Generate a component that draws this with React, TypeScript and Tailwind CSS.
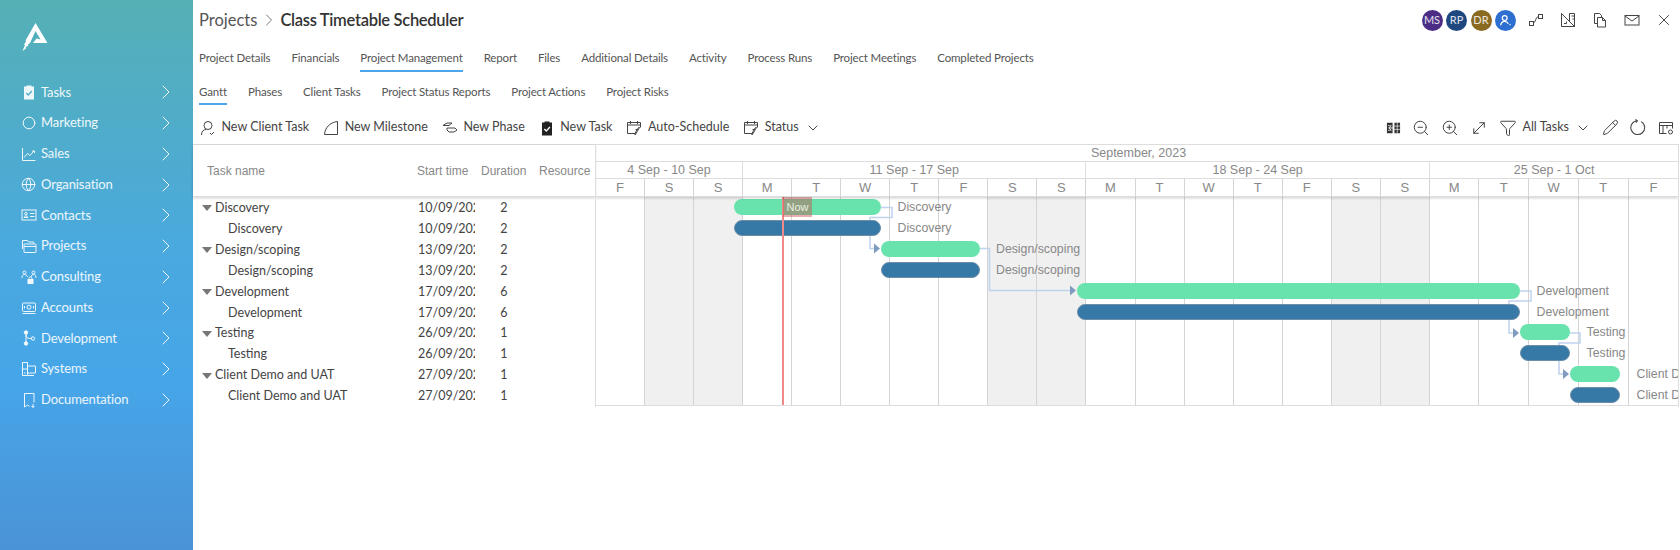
import {
  ChevronDown,
  ChevronRight,
  Circle,
  Funnel,
  Globe,
  MoveDiagonal,
  Pencil,
  X,
  ZoomIn,
  ZoomOut,
} from "lucide-react";
import type { ReactNode } from "react";

const DAY = 49.05;
const LAST_DAY = 49.7;
const ROW = 20.9;

function Ico({ size = 16, children, className = "" }: { size?: number; children: ReactNode; className?: string }) {
  return (
    <svg width={size} height={size} viewBox="0 0 16 16" fill="none" stroke="currentColor" strokeWidth="1" className={`shrink-0 ${className}`}>
      {children}
    </svg>
  );
}

function ClipboardFilled({ size = 16 }: { size?: number }) {
  return (
    <svg width={size} height={size} viewBox="0 0 16 16" className="shrink-0" fill="currentColor">
      <path d="M3 2.500h2.500V1.500h5v1H13v13H3z" />
      <path d="M5.300 9l2 2 3.600-4" fill="none" stroke="var(--tick)" strokeWidth="1.300" />
    </svg>
  );
}

function CalendarPen() {
  return (
    <Ico size={16}>
      <path d="M9 13.500H1.500v-11h13v5M1.500 5h13M4.500 1v3M11.500 1v3" />
      <path d="M13.500 7.500l-3.500 6-1 1.500.2-2 3.300-5.500zM9.500 9.500h2" />
    </Ico>
  );
}

const navIcons: Record<string, ReactNode> = {
  Tasks: <span className="[--tick:#55aecb]"><ClipboardFilled /></span>,
  Marketing: <Circle size={14} strokeWidth={1} absoluteStrokeWidth className="mx-px" />,
  Sales: (
    <Ico>
      <path d="M1.500 2v12.500h13M3 11.500l3.500-4 2.500 2 4-4.500M11 5h2.500v2" />
    </Ico>
  ),
  Organisation: <Globe size={15} strokeWidth={1} absoluteStrokeWidth />,
  Contacts: (
    <Ico>
      <rect x="1" y="3" width="14" height="10" />
      <circle cx="5" cy="6.700" r="1.300" />
      <path d="M3 10.500c.4-2 3.600-2 4 0zM9 6.500h4.500M9 9.500h4.500" />
    </Ico>
  ),
  Projects: (
    <Ico>
      <path d="M1.500 11V2.500h5l1 1.500h5v1.500" />
      <rect x="3" y="6" width="12" height="8.500" rx=".5" />
      <path d="M3 8.500h12" />
    </Ico>
  ),
  Consulting: (
    <Ico>
      <circle cx="3.500" cy="3.500" r="1.500" />
      <circle cx="12.500" cy="3.500" r="1.500" />
      <path d="M1 9c0-2.500 1-3.500 2.500-3.500S6 6.500 6.500 8M10 8c.5-1.500 1-2.500 2.500-2.500S15 6.500 15 9" />
      <rect x="7" y="10.500" width="5" height="4" fill="currentColor" />
      <path d="M8 10.500V9.500a1.500 1.500 0 0 1 3 0v1" />
    </Ico>
  ),
  Accounts: (
    <Ico>
      <rect x="1.500" y="3" width="13" height="8.500" rx="1" />
      <circle cx="8" cy="7.200" r="2" />
      <path d="M1.500 13.500h13M3.500 6v2.500M12.500 6v2.500" />
    </Ico>
  ),
  Development: (
    <Ico>
      <circle cx="5" cy="2.500" r="1.700" fill="currentColor" />
      <circle cx="5" cy="13.500" r="1.700" fill="currentColor" />
      <circle cx="12" cy="8.500" r="1.700" />
      <path d="M5 3v10M5 5c0 3 2 3.500 5.500 3.500" />
    </Ico>
  ),
  Systems: (
    <Ico>
      <path d="M6.500 14.500h-5V1.500h5z" />
      <path d="M6.500 5h8v7h-8M3 12h1.500M7 14.500h6M1.500 8h5" />
    </Ico>
  ),
  Documentation: (
    <Ico>
      <path d="M3.500 15V1.500h9.500v9M3.500 15l3-2 2 1.500M12 12v3.500M10.500 14l1.500 1.500 1.500-1.500" />
    </Ico>
  ),
};

const navItems = ["Tasks", "Marketing", "Sales", "Organisation", "Contacts", "Projects", "Consulting", "Accounts", "Development", "Systems", "Documentation"];
const mainTabs = ["Project Details", "Financials", "Project Management", "Report", "Files", "Additional Details", "Activity", "Process Runs", "Project Meetings", "Completed Projects"];
const subTabs = ["Gantt", "Phases", "Client Tasks", "Project Status Reports", "Project Actions", "Project Risks"];

const days = "FSSMTWTFSSMTWTFSSMTWTF".split("");
const weekends = [1, 2, 8, 9, 15, 16];
const dayWidth = (i: number) => (i >= 17 ? LAST_DAY : DAY);
const weeks = [
  { label: "4 Sep - 10 Sep", w: 3 * DAY },
  { label: "11 Sep - 17 Sep", w: 7 * DAY },
  { label: "18 Sep - 24 Sep", w: 7 * DAY },
  { label: "25 Sep - 1 Oct", w: 5 * LAST_DAY },
];

const tasks = [
  { name: "Discovery", start: "10/09/2023", dur: 2, from: 138, to: 285 },
  { name: "Design/scoping", start: "13/09/2023", dur: 2, from: 285, to: 383.5 },
  { name: "Development", start: "17/09/2023", dur: 6, from: 481, to: 924 },
  { name: "Testing", start: "26/09/2023", dur: 1, from: 924, to: 974 },
  { name: "Client Demo and UAT", start: "27/09/2023", dur: 1, from: 974, to: 1024 },
];

// dependency lines, in chart coordinates
const links = [
  "M285 10.500H296V20.500H274V51.500H279",
  "M383.500 51.500H393.500V93.500H475",
  "M924 94H935V104H913V136H918",
  "M974 136H984V146H963V177H968",
];
const arrows = [[285, 51.5], [481, 93.5], [924, 136], [974, 177]];

function TableRow({ name, start, dur, parent }: { name: string; start: string; dur: number; parent: boolean }) {
  return (
    <div className="flex h-[20.900px] items-center text-[12.500px] text-[#444]">
      <div className="flex w-[225px] items-center pl-[9px]">
        {parent ? (
          <>
            <span className="mr-[3px] h-0 w-0 border-x-[5px] border-t-[6px] border-x-transparent border-t-[#777]" />
            <span>{name}</span>
          </>
        ) : (
          <span className="pl-[26px]">{name}</span>
        )}
      </div>
      <div className="w-[56.500px] overflow-hidden whitespace-nowrap">{start}</div>
      <div className="w-[58.500px] text-center">{dur}</div>
    </div>
  );
}

function Gantt() {
  return (
    <div className="mr-px flex border-t border-[#ddd] font-['Liberation_Sans',sans-serif]">
      {/* Left: task table */}
      <div className="w-[402px] shrink-0">
        <div className="flex h-[52px] items-center border-b border-[#ddd] text-[12px] text-[#888] shadow-[0_1px_3px_rgba(0,0,0,0.2)]">
          <div className="w-[224px] pl-[14px]">Task name</div>
          <div className="w-[64px]">Start time</div>
          <div className="w-[58px]">Duration</div>
          <div>Resource</div>
        </div>
        <div className="pt-px font-['Lato',sans-serif]">
          {tasks.map((t) => (
            <div key={t.name}>
              <TableRow name={t.name} start={t.start} dur={t.dur} parent />
              <TableRow name={t.name} start={t.start} dur={t.dur} parent={false} />
            </div>
          ))}
        </div>
      </div>

      {/* Right: chart */}
      <div className="min-w-0 flex-1 overflow-hidden border-x border-[#ddd]">
        <div className="relative z-10 text-[12.500px] text-[#888] shadow-[0_1px_3px_rgba(0,0,0,0.2)]">
          <div className="flex h-[17px] items-center justify-center border-b border-[#ddd] pl-[3px]">September, 2023</div>
          <div className="flex h-[17px] border-b border-[#ddd]">
            {weeks.map((w) => (
              <div key={w.label} className="flex shrink-0 items-center justify-center border-r border-[#ddd] last:border-r-0" style={{ width: w.w }}>
                {w.label}
              </div>
            ))}
          </div>
          <div className="flex h-[18px] border-b border-[#ddd] text-[13px]">
            {days.map((d, i) => (
              <div key={i} className="flex shrink-0 items-center justify-center border-r border-[#d4d4d4] last:border-r-0" style={{ width: dayWidth(i) }}>
                {d}
              </div>
            ))}
          </div>
        </div>

        <div className="relative h-[209px] border-b border-[#ddd]">
          <div className="flex h-full">
            {days.map((_, i) => (
              <div
                key={i}
                className={`shrink-0 border-r border-[#d4d4d4] last:border-r-0 ${weekends.includes(i) ? "bg-[#f0f0f0]" : ""}`}
                style={{ width: dayWidth(i) }}
              />
            ))}
          </div>

          <svg className="absolute inset-0 h-full w-full" fill="none">
            {links.map((d) => (
              <path key={d} d={d} stroke="#bfd2ee" strokeWidth="1.500" />
            ))}
          </svg>

          {tasks.map((t, i) => (
            <div key={t.name}>
              <div className="absolute h-[16px] rounded-[8px] bg-[#68e3ae]" style={{ left: t.from, width: t.to - t.from, top: i * 2 * ROW + 2 }} />
              <div className="absolute h-[16px] rounded-[8px] border border-[#6d8ea8] bg-[#3679a7]" style={{ left: t.from, width: t.to - t.from, top: (i * 2 + 1) * ROW + 2 }} />
              <div className="absolute whitespace-nowrap text-[12.300px] leading-[15px] text-[#888]" style={{ left: t.to + 16.5, top: i * 2 * ROW + 3 }}>
                {t.name}
              </div>
              <div className="absolute whitespace-nowrap text-[12.300px] leading-[15px] text-[#888]" style={{ left: t.to + 16.5, top: (i * 2 + 1) * ROW + 3 }}>
                {t.name}
              </div>
            </div>
          ))}

          <svg className="absolute inset-0 h-full w-full" fill="#7f9cc0">
            {arrows.map(([x, y]) => (
              <polygon key={x} points={`${x - 7},${y - 5} ${x - 1},${y} ${x - 7},${y + 5}`} />
            ))}
          </svg>

          {/* Today marker */}
          <div className="absolute bottom-0 left-[186px] top-0 w-[2px] bg-[#f08a8a]" />
          <div className="absolute left-[187px] top-0 flex h-[20px] w-[29px] items-center justify-center bg-[rgba(200,80,80,0.45)] text-[11px] text-[#e8f0e0]">Now</div>
        </div>
      </div>
    </div>
  );
}

export default function App() {
  return (
    <div className="flex h-screen w-full overflow-hidden bg-white font-['Lato',sans-serif]">
      {/* Sidebar */}
      <aside className="flex w-[193px] shrink-0 flex-col bg-[linear-gradient(180deg,#55b0b5_0%,#4aa9de_45%,#46a5e8_70%,#4b93d6_100%)] text-white">
        <div className="h-[77px] pl-[22px] pt-[23px]">
          <svg width="26" height="28" viewBox="0 0 26 28" fill="white">
            <path d="M13.500 0L25.500 20H11L14.500 15.500L18.500 16.500L13.500 8L8 20L6 21.500L6.500 22.500L3.500 24.500L4 25.500L0.500 28L3 22L2 21.500L4 18.500L3.500 17.500Z" />
          </svg>
        </div>
        <nav>
          {navItems.map((item) => (
            <div key={item} className="flex h-[30.750px] items-center pl-[21px] pr-[15px] text-[13px] tracking-[-0.1px] text-white/90">
              <span className="flex w-[20px] shrink-0 justify-start">{navIcons[item]}</span>
              <span className="flex-1">{item}</span>
              <ChevronRight size={24} strokeWidth={1} absoluteStrokeWidth />
            </div>
          ))}
        </nav>
      </aside>

      <main className="min-w-0 flex-1">
        {/* Title bar */}
        <div className="flex h-[40px] items-center pl-[6px] pr-[8px] text-[16.500px]">
          <span className="text-[#555]">Projects</span>
          <ChevronRight size={20} strokeWidth={1} absoluteStrokeWidth className="mx-[1.500px] text-[#777]" />
          <span className="font-semibold tracking-[-0.3px] text-[#333]">Class Timetable Scheduler</span>
          <div className="ml-auto flex items-center">
            <div className="flex items-center gap-[3.500px] text-[11px] text-white/85">
              <span className="flex h-[21px] w-[21px] items-center justify-center rounded-full bg-[#4b2d85]">MS</span>
              <span className="flex h-[21px] w-[21px] items-center justify-center rounded-full bg-[#1f477f]">RP</span>
              <span className="flex h-[21px] w-[21px] items-center justify-center rounded-full bg-[#8a6a20]">DR</span>
              <span className="flex h-[21px] w-[21px] items-center justify-center rounded-full bg-[#2d6fd0]">
                <svg width="13" height="13" viewBox="0 0 16 16" fill="none" stroke="white" strokeWidth="1.500">
                  <circle cx="7" cy="5" r="3" />
                  <path d="M2 14c.5-3.500 2.500-5 5-5s3.500 1 4.500 3M13 12.500l1 1" />
                </svg>
              </span>
            </div>
            <div className="ml-[12px] flex items-center gap-[16px] text-[#444]">
              <Ico>
                <rect x="1.500" y="9.500" width="4" height="4" />
                <rect x="10.500" y="2.500" width="4" height="4" />
                <path d="M5.500 11c2.500-.5 1.500-6 5-6.500" />
              </Ico>
              <Ico>
                <path d="M1.500 1.500L14.500 14.500H1.500Z" />
                <path d="M14.500 1.500h-5v8l5 5z" />
                <path d="M11.500 4h3M12.500 7h2M4 11.500h2.500v-2" />
              </Ico>
              <Ico>
                <path d="M5.500 11.500H2.500V1.500h5l2 2v2" />
                <path d="M5.500 5.500h5l3 3v6.500h-8zM10.500 5.500v3h3" />
              </Ico>
              <Ico>
                <rect x="1" y="3.500" width="14" height="9.500" />
                <path d="M1 4l7 5 7-5" />
              </Ico>
              <X size={18} strokeWidth={1} absoluteStrokeWidth className="-mx-px" />
            </div>
          </div>
        </div>

        {/* Main tabs */}
        <div className="flex h-[32px] gap-[21px] pl-[6px] text-[11.500px] tracking-[-0.15px] text-[#555]">
          {mainTabs.map((t) => (
            <div key={t} className={`flex h-full items-center border-b-2 pt-[6px] ${t === "Project Management" ? "border-[#4da6ea]" : "border-transparent"}`}>
              {t}
            </div>
          ))}
        </div>

        {/* Sub tabs */}
        <div className="flex h-[33px] gap-[21px] pl-[6px] text-[11.500px] tracking-[-0.15px] text-[#555]">
          {subTabs.map((t) => (
            <div key={t} className={`flex h-full items-center border-b-2 pt-[9px] ${t === "Gantt" ? "border-[#4da6ea]" : "border-transparent"}`}>
              {t}
            </div>
          ))}
        </div>

        {/* Toolbar */}
        <div className="flex h-[39px] items-center pl-[7px] pr-[6px] pt-[6px] text-[12.500px] text-[#444]">
          <div className="flex items-center gap-[14px]">
            <div className="flex items-center gap-[5.500px]">
              <Ico>
                <circle cx="8" cy="5.500" r="4" />
                <path d="M1.500 15c0-3.500 2-5.500 4.500-5.500M10 13l1.500 1.500L14 12" />
              </Ico>
              New Client Task
            </div>
            <div className="flex items-center gap-[5.500px]">
              <Ico>
                <path d="M1.500 14.500C2 8 6.500 2.500 14.500 1.500v13z" />
              </Ico>
              New Milestone
            </div>
            <div className="flex items-center gap-[5.500px]">
              <Ico>
                <path d="M1 5.500L5 3h5l-3 2.500zM5 8h8l2 2-3 2H7L5 10z" />
              </Ico>
              New Phase
            </div>
            <div className="flex items-center gap-[5.500px] [--tick:#fff]">
              <span className="text-[#222]">
                <ClipboardFilled />
              </span>
              New Task
            </div>
            <div className="flex items-center gap-[5.500px]">
              <CalendarPen />
              Auto-Schedule
            </div>
            <div className="flex items-center gap-[5.500px]">
              <CalendarPen />
              Status
              <ChevronDown size={16} strokeWidth={1} absoluteStrokeWidth className="ml-px" />
            </div>
          </div>
          <div className="ml-auto flex items-center gap-[11px] text-[#444]">
            <svg width="15" height="15" viewBox="0 0 16 16" className="shrink-0" fill="#333">
              <path d="M1 3h6v11H1zM9 3h6v11H9z" />
              <path d="M9 6.500h6M9 10h6M12 3v11M2 6h4M2 11h4" stroke="white" strokeWidth=".7" />
              <path d="M8.500 8.500H3M5 6.500l-2 2 2 2" stroke="white" strokeWidth="1" fill="none" />
            </svg>
            <ZoomOut size={18} strokeWidth={1} absoluteStrokeWidth />
            <ZoomIn size={18} strokeWidth={1} absoluteStrokeWidth />
            <MoveDiagonal size={18} strokeWidth={1} absoluteStrokeWidth />
            <div className="flex items-center gap-[5px]">
              <Funnel size={18} strokeWidth={1} absoluteStrokeWidth />
              <span>All Tasks</span>
              <ChevronDown size={16} strokeWidth={1} absoluteStrokeWidth className="ml-[1px]" />
            </div>
            <Pencil size={17} strokeWidth={1} absoluteStrokeWidth />
            <Ico size={17}>
              <path d="M10.500 2.500A6.500 6.500 0 1 1 6.500 1.700" />
              <path d="M5 .5L7 1.800 5.500 3.500" />
            </Ico>
            <Ico>
              <path d="M8.500 13.500H1.500v-11h13v6M1.500 5.500h13M5 5.500v8M9 5.500v3" />
              <circle cx="12.500" cy="12" r="2" />
            </Ico>
          </div>
        </div>

        <Gantt />
      </main>
    </div>
  );
}
